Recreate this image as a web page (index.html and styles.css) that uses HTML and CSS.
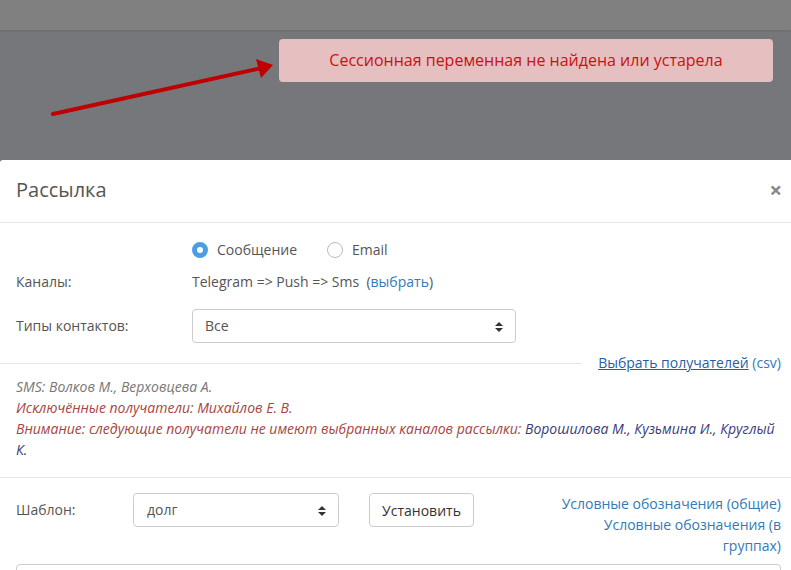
FILE: index.html
```html
<!DOCTYPE html>
<html lang="ru">
<head>
    <meta charset="UTF-8">
    <title>Рассылка</title>
    <link rel="stylesheet" href="styles.css">
</head>
<body>
    <div class="topbar"></div>
    <div class="overlay">
        <div class="alert">Сессионная переменная не найдена или устарела</div>
        <svg class="arrow" width="300" height="130" viewBox="0 0 300 130">
            <line x1="53" y1="84" x2="262" y2="38" stroke="#c00000" stroke-width="4" stroke-linecap="round"/>
            <polygon points="273,35 256,29 261,48" fill="#c00000"/>
        </svg>
    </div>
    <div class="modal">
        <div class="modal-header">
            <h4 class="modal-title">Рассылка</h4>
            <span class="close">&times;</span>
        </div>
        <div class="modal-body">
            <div class="row">
                <div class="label"></div>
                <div class="radios">
                    <label class="radio"><span class="dot checked"></span>Сообщение</label>
                    <label class="radio"><span class="dot"></span>Email</label>
                </div>
            </div>
            <div class="row row-channels">
                <div class="label">Каналы:</div>
                <div>Telegram =&gt; Push =&gt; Sms &nbsp;(<a href="#">выбрать</a>)</div>
            </div>
            <div class="row row-types">
                <div class="label">Типы контактов:</div>
                <div class="select select-types">Все<span class="caret"></span></div>
            </div>
        </div>
        <div class="split">
            <div class="split-line"></div>
            <div class="split-link"><a href="#" class="under">Выбрать получателей</a> <a href="#">(csv)</a></div>
        </div>
        <div class="notes">
            <div class="muted">SMS: Волков М., Верховцева А.</div>
            <div class="danger">Исключённые получатели: Михайлов Е. В.</div>
            <div class="danger">Внимание: следующие получатели не имеют выбранных каналов рассылки: <span class="names">Ворошилова М., Кузьмина И., Круглый К.</span></div>
        </div>
        <div class="template">
            <div class="label label-short">Шаблон:</div>
            <div class="select select-template">долг<span class="caret"></span></div>
            <button class="btn">Установить</button>
            <div class="legend">
                <a href="#">Условные обозначения (общие)</a><br>
                <a href="#">Условные обозначения (в группах)</a>
            </div>
        </div>
        <div class="textbox"></div>
    </div>
</body>
</html>
```

FILE: styles.css
```css
body {
    margin: 0;
    font-family: "Open Sans", sans-serif;
    font-size: 14px;
    line-height: 20px;
    color: #555;
    background-color: #76777b;
    overflow: hidden;
}

a {
    color: #337ab7;
    text-decoration: none;
}

.topbar {
    height: 30px;
    background-color: #808080;
    box-shadow: 0 1px 2px rgba(0, 0, 0, 0.12);
}

.overlay {
    position: relative;
    height: 130px;
    display: flex;
    justify-content: flex-end;
    align-items: flex-start;
    padding: 9px 18px 0 0;
    box-sizing: border-box;
}

.alert {
    width: 494px;
    height: 43px;
    box-sizing: border-box;
    background-color: #e6bfc0;
    color: #cc1010;
    border-radius: 4px;
    font-size: 16px;
    line-height: 43px;
    text-align: center;
}

.arrow {
    position: absolute;
    left: 0;
    top: 0;
}

.modal {
    background: white;
    border-radius: 3px 0 0 0;
    padding-bottom: 40px;
}

.modal-header {
    display: flex;
    justify-content: space-between;
    align-items: center;
    height: 62px;
    padding: 0 9px 0 16px;
    border-bottom: 1px solid #e5e5e5;
}

.modal-title {
    margin: 0;
    font-size: 20px;
    font-weight: normal;
    color: #555;
    padding-bottom: 2px;
}

.close {
    font-size: 22px;
    font-weight: bold;
    color: #888;
    margin-top: -4px;
}

.modal-body {
    padding: 17px 16px 0;
}

.row {
    display: flex;
    align-items: center;
}

.label {
    width: 176px;
    flex-shrink: 0;
}

.radios {
    display: flex;
    gap: 30px;
}

.radio {
    display: flex;
    align-items: center;
    gap: 9px;
}

.dot {
    width: 16px;
    height: 16px;
    border: 1px solid #bbb;
    border-radius: 50%;
    box-sizing: border-box;
}

.dot.checked {
    border: 5px solid #4a9fe0;
    background: white;
}

.row-channels {
    margin-top: 12px;
}

.row-types {
    margin-top: 17px;
}

.select {
    position: relative;
    height: 34px;
    box-sizing: border-box;
    border: 1px solid #ccc;
    border-radius: 4px;
    padding: 6px 12px;
    color: #555;
}

.select-types {
    width: 324px;
}

.caret {
    position: absolute;
    right: 12px;
    top: 12px;
    width: 0;
    height: 0;
    border-left: 4px solid transparent;
    border-right: 4px solid transparent;
    border-bottom: 4px solid #333;
}

.caret::after {
    content: "";
    position: absolute;
    left: -4px;
    top: 6px;
    border-left: 4px solid transparent;
    border-right: 4px solid transparent;
    border-top: 4px solid #333;
}

.split {
    display: flex;
    align-items: center;
    margin-top: 10px;
    padding-right: 10px;
}

.split-line {
    flex: 1;
    height: 1px;
    background: #e5e5e5;
}

.split-link {
    margin-left: 16px;
}

.split-link .under {
    color: #1f5fa8;
    text-decoration: underline;
}

.notes {
    padding: 3px 16px 17px;
    font-style: italic;
    line-height: 21px;
    border-bottom: 1px solid #e5e5e5;
}

.muted {
    color: #777;
}

.danger {
    color: #a94442;
}

.names {
    color: #3b3b7a;
}

.template {
    display: flex;
    align-items: flex-start;
    padding: 15px 10px 0 16px;
}

.template .label-short {
    width: 117px;
    line-height: 34px;
}

.select-template {
    width: 206px;
    padding-left: 13px;
}

.btn {
    margin-left: 30px;
    height: 34px;
    width: 105px;
    font-family: "Open Sans", sans-serif;
    font-size: 14px;
    color: #333;
    background: white;
    border: 1px solid #ccc;
    border-radius: 4px;
}

.legend {
    flex: 1;
    text-align: right;
    line-height: 21px;
    padding-left: 80px;
}

.textbox {
    margin: 8px 10px 0 16px;
    height: 40px;
    border: 1px solid #ccc;
    border-radius: 4px;
}
```
